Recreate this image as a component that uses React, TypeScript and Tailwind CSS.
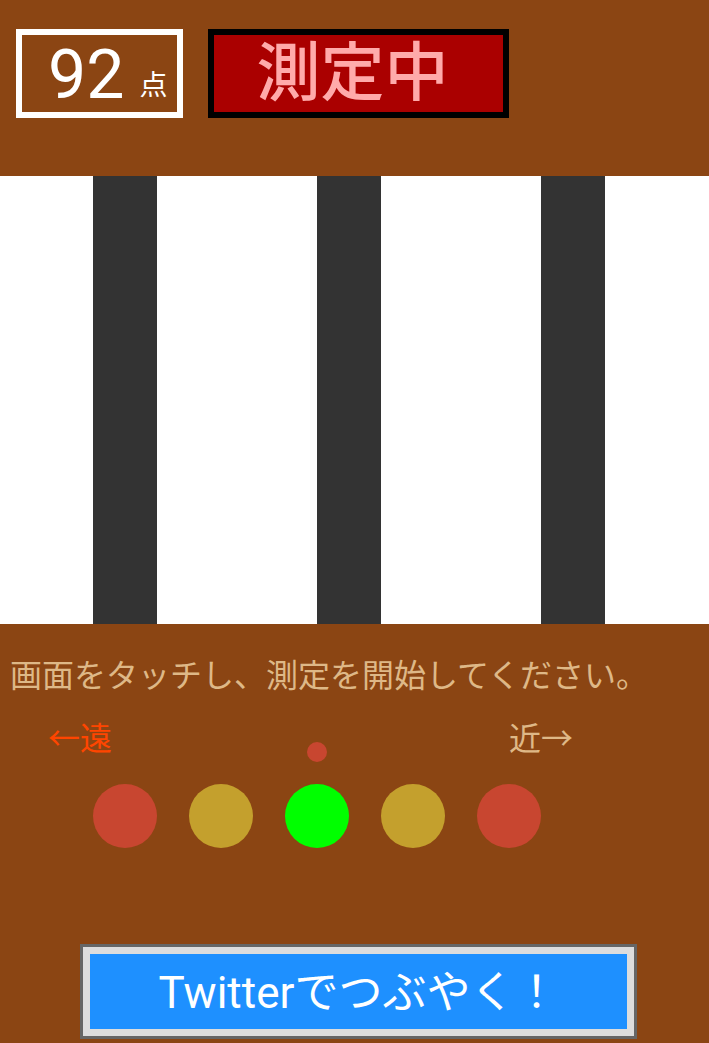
const FONT = "font-['Roboto','Noto_Sans_CJK_JP',sans-serif]";

function Stripes() {
  return (
    <div className="flex h-[448px] w-full bg-white">
      <div className="w-[93px]" />
      <div className="w-[64px] bg-[#333333]" />
      <div className="w-[160px]" />
      <div className="w-[64px] bg-[#333333]" />
      <div className="w-[160px]" />
      <div className="w-[64px] bg-[#333333]" />
    </div>
  );
}

const LAMPS = ["bg-[#c84630]", "bg-[#c4a02d]", "bg-[#00ff00]", "bg-[#c4a02d]", "bg-[#c84630]"];

export default function App() {
  return (
    <div className={`${FONT} h-[1043px] w-[709px] overflow-hidden bg-[#8b4513]`}>
      {/* Header: score + status */}
      <div className="flex h-[176px] gap-[25px] pl-[16px] pt-[29px]">
        <div className="flex h-[89px] w-[167px] items-center border-[6px] border-white pl-[26px] pt-[2px] text-white">
          <span className="text-[68px] leading-none">92</span>
          <span className="ml-[15px] mt-[22px] text-[28px] leading-none">点</span>
        </div>
        <div className="flex h-[89px] w-[301px] items-center justify-center border-[6px] border-black bg-[#aa0000] pr-[12px]">
          <span className="text-[64px] font-medium leading-none text-[#ffaaaa]">測定中</span>
        </div>
      </div>

      <Stripes />

      {/* Instructions */}
      <p className="mt-[36px] pl-[10px] text-[32px] leading-none text-[#deb887]">
        画面をタッチし、測定を開始してください。
      </p>

      <div className="mt-[31px] flex items-start pl-[48px] text-[32px] leading-none">
        <span className="w-[64px] text-[#ff4500]">←遠</span>
        <div className="ml-[195px] mt-[19px] h-[20px] w-[20px] rounded-full bg-[#c84630]" />
        <span className="ml-[182px] text-[#deb887]">近→</span>
      </div>

      <div className="mt-[22px] flex gap-[32px] pl-[93px]">
        {LAMPS.map((c, i) => (
          <div key={i} className={`h-[64px] w-[64px] rounded-full ${c}`} />
        ))}
      </div>

      {/* Tweet button */}
      <div className="ml-[80px] mt-[96px] w-[557px] border-[3px] border-[#666666] bg-[#dddddd] p-[7px]">
        <button
          type="button"
          className="flex h-[75px] w-full items-center justify-center bg-[#1e90ff] pt-[3px] text-[44px] leading-none text-white"
        >
          Twitterでつぶやく！
        </button>
      </div>
    </div>
  );
}
